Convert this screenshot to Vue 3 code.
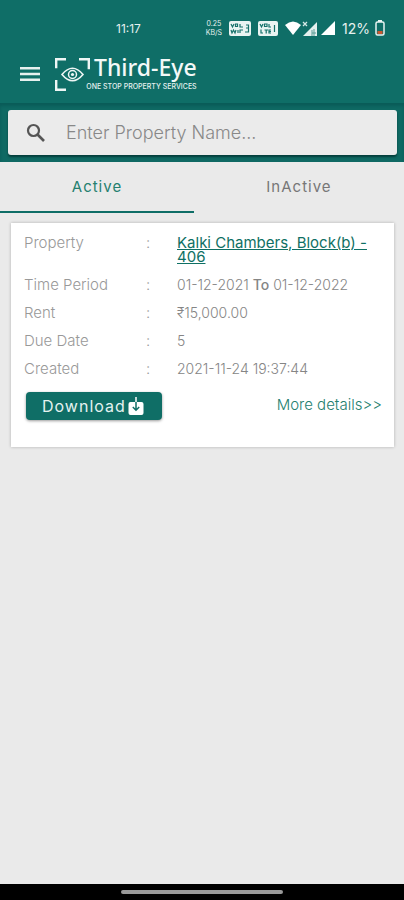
<script setup>
import { ref } from 'vue'

const query = ref('')
const tabs = ['Active', 'InActive']
const activeTab = ref('Active')

const details = [
  { label: 'Time Period', from: '01-12-2021', to: '01-12-2022' },
  { label: 'Rent', value: '₹15,000.00' },
  { label: 'Due Date', value: '5' },
  { label: 'Created', value: '2021-11-24 19:37:44' }
]
</script>

<template>
  <div class="screen">
    <header class="top">
      <div class="status">
        <span class="clock">11:17</span>
        <div class="indicators">
          <span class="speed"><span>0.25</span><span>KB/S</span></span>
          <svg class="vowifi" width="22" height="15" viewBox="0 0 22 15" aria-hidden="true">
            <rect width="22" height="15" rx="2" fill="#e9f4f2" />
            <g fill="none" stroke="#14716a" stroke-width="1.2">
              <path d="M2 3l1.500 3L5 3M6.500 3h2v2.500h-2zM11 3v3h3M2 9l1 3 1.500-3L6 12l1-3M9 9v3M11 12V9h3M17 4h2.500v3H17M19.500 7v4H16" />
            </g>
          </svg>
          <svg class="volte" width="20" height="15" viewBox="0 0 20 15" aria-hidden="true">
            <rect width="20" height="15" rx="2" fill="#e9f4f2" />
            <g fill="none" stroke="#14716a" stroke-width="1.2">
              <path d="M2 3l1.500 3L5 3M6.500 3h2.500v2.500H6.500zM11 3v3h2M3 8.500V12h2M6.500 9H10M8.200 9v3.500M13 9h-2v3h2M11 10.500h2M16.500 4v7" />
            </g>
          </svg>
          <svg class="wifi" width="16" height="14" viewBox="0 0 16 14" aria-hidden="true">
            <path d="M0 4Q8-3 16 4L8 14z" fill="#fff" />
          </svg>
          <svg class="signal-x" width="16" height="15" viewBox="0 0 16 15" aria-hidden="true">
            <path d="M15 1v14H1z" fill="#e4f0ee" />
            <path d="M1 1l4 4M5 1L1 5" stroke="#d5e9e6" stroke-width="1.300" />
            <path d="M10 15V9M12 15V8M14 12h-4" stroke="#5b9c96" />
          </svg>
          <svg class="signal" width="14" height="14" viewBox="0 0 14 14" aria-hidden="true">
            <path d="M14 0v14H0z" fill="#fff" />
          </svg>
          <span class="percent">12%</span>
          <svg width="10" height="16" viewBox="0 0 10 16" aria-hidden="true">
            <path d="M3 0h4v2H3z" fill="#e9f4f2" />
            <rect x="1" y="2" width="8" height="13" rx="1.500" fill="none" stroke="#e9f4f2" stroke-width="1.500" />
            <path d="M2.500 11h5v3h-5z" fill="#c9572f" />
          </svg>
        </div>
      </div>

      <div class="toolbar">
        <button class="menu" type="button" aria-label="Menu">
          <svg width="20" height="14" viewBox="0 0 20 14" aria-hidden="true">
            <path d="M0 1.300h20M0 7h20M0 12.700h20" stroke="#e6f1ef" stroke-width="2.500" />
          </svg>
        </button>
        <div class="brand">
          <svg class="eye" width="35" height="33" viewBox="0 0 35 33" aria-hidden="true">
            <g fill="none" stroke="#eef6f5">
              <path d="M11 1.200H1.200v9M24 1.200h9.800v10M1.200 22v9.800H11" stroke-width="2.400" />
              <path d="M7 16.500Q17.500 4 28 16.500Q17.500 29 7 16.500z" stroke-width="1.600" />
              <circle cx="17.500" cy="16.500" r="4" stroke-width="1.500" />
            </g>
            <circle cx="17.500" cy="16.500" r="1.600" fill="#eef6f5" />
          </svg>
          <span class="name">Third-Eye</span>
          <span class="tagline">ONE STOP PROPERTY SERVICES</span>
        </div>
      </div>
    </header>

    <div class="search-band">
      <label class="search">
        <svg width="20" height="20" viewBox="0 0 20 20" aria-hidden="true">
          <circle cx="7.500" cy="7.500" r="5.500" fill="none" stroke="#555" stroke-width="2.200" />
          <path d="M11.500 11.500l6.500 6.500" stroke="#555" stroke-width="2.600" />
        </svg>
        <input v-model="query" type="search" placeholder="Enter Property Name..." aria-label="Enter Property Name" />
      </label>
    </div>

    <nav class="tabs">
      <button
        v-for="tab in tabs"
        :key="tab"
        type="button"
        class="tab"
        :class="{ selected: tab === activeTab }"
        @click="activeTab = tab"
      >{{ tab }}</button>
    </nav>

    <main class="content">
      <article class="card">
        <dl class="fields">
          <div class="field">
            <dt>Property</dt>
            <span class="colon">:</span>
            <dd><a class="property" href="#property">Kalki Chambers, Block(b) - 406</a></dd>
          </div>
          <div v-for="item in details" :key="item.label" class="field">
            <dt>{{ item.label }}</dt>
            <span class="colon">:</span>
            <dd v-if="item.from">{{ item.from }} <b>To</b> {{ item.to }}</dd>
            <dd v-else>{{ item.value }}</dd>
          </div>
        </dl>
        <div class="actions">
          <button class="download" type="button">
            Download
            <svg width="16" height="19" viewBox="0 0 16 19" aria-hidden="true">
              <path d="M2.500 5h11A2 2 0 0 1 15.500 7v9a2 2 0 0 1-2 2h-11a2 2 0 0 1-2-2V7a2 2 0 0 1 2-2z" fill="#fff" />
              <path d="M8 0v5" stroke="#fff" stroke-width="1.500" />
              <path d="M8 5v8M4.800 10L8 13.200 11.200 10" fill="none" stroke="#0f6e66" stroke-width="1.500" />
            </svg>
          </button>
          <a class="more" href="#details">More details&gt;&gt;</a>
        </div>
      </article>
    </main>

    <footer class="gesture"><span class="pill"></span></footer>
  </div>
</template>

<style>
body {
  margin: 0;
  background: #eaeaea;
}
</style>

<style scoped>
.screen {
  display: flex;
  flex-direction: column;
  min-height: 100vh;
  background: #eaeaea;
  color: #858585;
  font-family: Inter, "Noto Sans", sans-serif;
  font-size: 14px;
  font-weight: 300;
}

button {
  margin: 0;
  padding: 0;
  border: 0;
  background: none;
  font: inherit;
  cursor: pointer;
}

.top {
  background: #0f6e67;
  color: #e6f1ef;
}

.status {
  display: flex;
  align-items: center;
  justify-content: space-between;
  padding: 18px 19px 0 116px;
  height: 20px;
}

.clock {
  font-size: 12px;
  font-weight: 400;
}

.indicators {
  display: flex;
  align-items: center;
  gap: 7px;
}

.speed {
  display: flex;
  flex-direction: column;
  align-items: center;
  font-size: 7px;
  font-weight: 400;
  line-height: 9px;
}

.wifi {
  margin-right: -6px;
}

.signal-x {
  margin-right: -4px;
}

.percent {
  font-size: 14px;
  font-weight: 400;
  margin-right: -2px;
}

.toolbar {
  display: flex;
  align-items: center;
  gap: 15px;
  padding: 17px 20px 11px;
}

.menu svg,
.brand svg {
  display: block;
}

.brand {
  display: grid;
  grid-template-columns: auto auto;
  grid-template-rows: 26px 11px;
  column-gap: 4px;
}

.eye {
  grid-area: 1 / 1 / 3 / 2;
  margin-top: 3px;
}

.name {
  grid-area: 1 / 2;
  font-family: "Noto Sans", sans-serif;
  font-size: 23px;
  font-weight: 500;
  line-height: 24px;
  color: #f3f9f8;
}

.tagline {
  grid-area: 2 / 1 / 3 / 3;
  justify-self: end;
  font-size: 7px;
  font-weight: 500;
  line-height: 11px;
  white-space: nowrap;
}

.search-band {
  padding: 7px 7px 7px 8px;
  background: #0f6963;
  box-shadow: inset 0 3px 3px #0a5c59;
}

.search {
  display: flex;
  align-items: center;
  gap: 20px;
  height: 45px;
  padding: 0 18px;
  border-radius: 3px;
  background: #ebebeb;
  box-shadow: 0 2px 2px #053f3c;
}

.search input {
  flex: 1;
  min-width: 0;
  padding: 0;
  border: 0;
  outline: 0;
  background: none;
  color: #666;
  font: inherit;
  font-size: 18px;
}

.search input::placeholder {
  color: #888;
  opacity: 1;
}

.tabs {
  display: grid;
  grid-template-columns: 12fr 13fr;
}

.tab {
  height: 51px;
  border-bottom: 2px solid transparent;
  color: #777;
  font-size: 15px;
  font-weight: 400;
  letter-spacing: 1px;
}

.tab.selected {
  border-color: #0f6e67;
  color: #25806f;
}

.content {
  flex: 1;
  padding: 10px 10px 24px 11px;
}

.card {
  padding: 13px 12px 27px 13px;
  background: #fff;
  box-shadow: 0 0 3px rgba(0, 0, 0, 0.25);
}

.fields {
  display: flex;
  flex-direction: column;
  gap: 14px;
  margin: 0;
}

.field {
  display: grid;
  grid-template-columns: 122px 31px 1fr;
  line-height: 14px;
}

dt,
.colon {
  color: #999;
  font-size: 15px;
}

dd {
  margin: 0;
}

dd b {
  font-weight: 500;
}

.property {
  color: #0f7064;
  font-size: 15px;
  font-weight: 400;
  text-decoration: underline;
}

.actions {
  display: flex;
  align-items: center;
  justify-content: space-between;
  margin-top: 16px;
  padding-left: 2px;
}

.download {
  display: flex;
  align-items: center;
  gap: 2px;
  height: 28px;
  padding: 0 18px 0 16px;
  border-radius: 4px;
  background: #0f6e66;
  box-shadow: 0 1px 3px rgba(0, 0, 0, 0.4);
  color: #e4f2f0;
  font-size: 16px;
  font-weight: 400;
  letter-spacing: 1px;
}

.more {
  margin-bottom: 4px;
  color: #25806f;
  font-size: 15px;
  text-decoration: none;
}

.gesture {
  display: flex;
  align-items: center;
  justify-content: center;
  height: 16px;
  background: #000;
}

.pill {
  width: 40%;
  height: 4px;
  border-radius: 2px;
  background: #999;
}
</style>
